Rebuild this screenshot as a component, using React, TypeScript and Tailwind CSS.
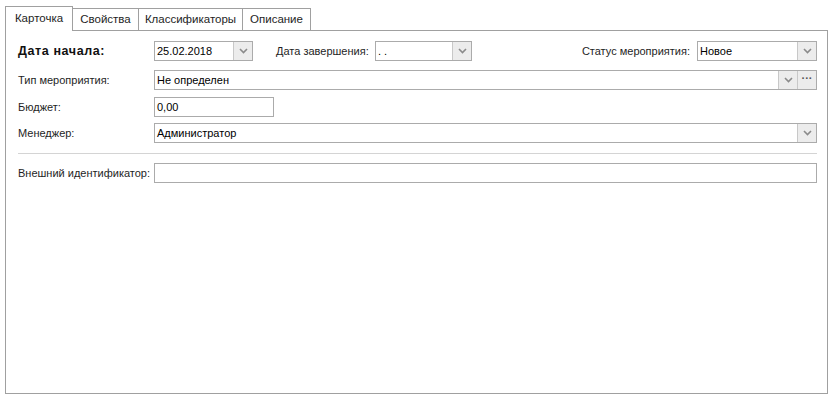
import React from "react";

function Chevron() {
  return (
    <svg width="9" height="6" viewBox="0 0 9 6" className="block">
      <path d="M1 1 L4.5 4.5 L8 1" fill="none" stroke="#8a8a8a" strokeWidth="1.6" />
    </svg>
  );
}

function DropBtn() {
  return (
    <div className="w-[19px] self-stretch flex items-center justify-center bg-[#ececec] border-l border-[#c8c8c8]">
      <Chevron />
    </div>
  );
}

function Combo({ value, className }: { value: string; className?: string }) {
  return (
    <div className={"h-[20px] flex border border-[#ababab] bg-white " + (className ?? "")}>
      <div className="flex-1 pl-[2px] leading-[18px] text-black truncate">{value}</div>
      <DropBtn />
    </div>
  );
}

const tabs = [
  { t: "Карточка", w: "w-[68px]" },
  { t: "Свойства", w: "w-[66px]" },
  { t: "Классификаторы", w: "w-[104px]" },
  { t: "Описание", w: "w-[68px]" },
];

export default function App() {
  return (
    <div
      className="w-[833px] h-[396px] bg-white text-[11px] text-[#1e1e1e] relative whitespace-nowrap"
      style={{ fontFamily: "'Liberation Sans', Arial, sans-serif" }}
    >
      <div className="pt-[5px] pl-[5px] flex items-end h-[30px]">
        {tabs.map((tab, i) =>
          i === 0 ? (
            <div
              key={tab.t}
              className={tab.w + " h-[25px] border border-b-0 border-[#a0a0a0] bg-white relative z-10 -mb-px flex items-center justify-center text-[11.5px]"}
            >
              {tab.t}
            </div>
          ) : (
            <div
              key={tab.t}
              className={tab.w + " h-[22px] border-t border-r border-[#a0a0a0] bg-white flex items-center justify-center text-[11.5px]"}
            >
              {tab.t}
            </div>
          )
        )}
      </div>
      <div className="ml-[5px] w-[823px] h-[364px] border border-[#a0a0a0] pl-[12px] pr-[10px] pt-[10px] flex flex-col">
        <div className="flex items-center h-[20px]">
          <div className="w-[136px] font-bold text-[12.5px] tracking-[0.6px] text-[#111]">Дата начала:</div>
          <Combo value="25.02.2018" className="w-[99px]" />
          <div className="ml-[23px] w-[99px]">Дата завершения:</div>
          <Combo value=". ." className="w-[97px]" />
          <div className="flex-1" />
          <div className="mr-[7px]">Статус мероприятия:</div>
          <Combo value="Новое" className="w-[120px]" />
        </div>
        <div className="flex items-center h-[20px] mt-[9px]">
          <div className="w-[136px]">Тип мероприятия:</div>
          <div className="flex-1 h-[20px] flex border border-[#ababab] bg-white">
            <div className="flex-1 pl-[2px] leading-[18px] text-black">Не определен</div>
            <DropBtn />
            <div className="w-[19px] self-stretch flex items-center justify-center bg-[#ececec] border-l border-[#c8c8c8] text-[#555] font-bold leading-none pb-[3px]">
              ···
            </div>
          </div>
        </div>
        <div className="flex items-center h-[20px] mt-[7px]">
          <div className="w-[136px]">Бюджет:</div>
          <div className="w-[120px] h-[20px] border border-[#ababab] pl-[2px] leading-[18px] text-black">0,00</div>
        </div>
        <div className="flex items-center h-[20px] mt-[6px]">
          <div className="w-[136px]">Менеджер:</div>
          <Combo value="Администратор" className="flex-1" />
        </div>
        <div className="mt-[10px] h-px bg-[#d4d4d4]" />
        <div className="flex items-center h-[20px] mt-[9px]">
          <div className="w-[136px]">Внешний идентификатор:</div>
          <div className="flex-1 h-[20px] border border-[#ababab]" />
        </div>
      </div>
    </div>
  );
}
